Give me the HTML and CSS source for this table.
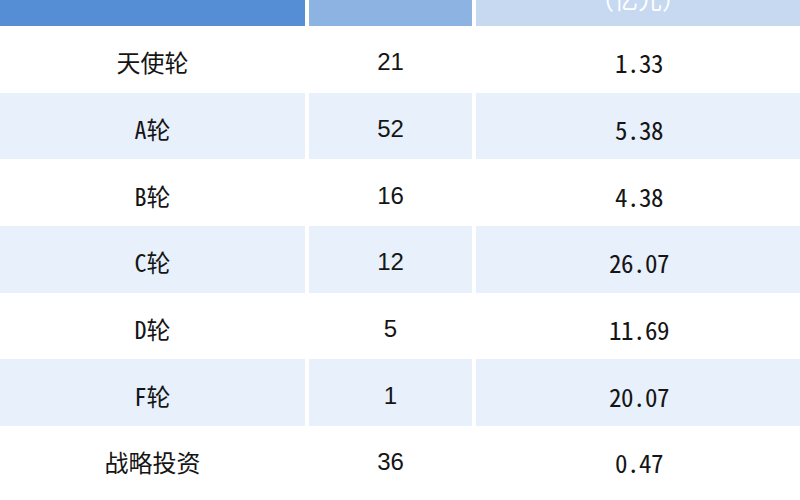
FILE: index.html
```html
<!DOCTYPE html>
<html lang="zh-CN">
<head>
<meta charset="utf-8">
<link rel="stylesheet" href="styles.css">
<title>融资轮次</title>
</head>
<body>
<div class="table">
  <div class="cell head h1"></div>
  <div class="cell head h2"></div>
  <div class="cell head h3"><span>（亿元）</span></div>

  <div class="cell name">天使轮</div><div class="cell num">21</div><div class="cell amt">1.33</div>
  <div class="cell name alt">A轮</div><div class="cell num alt">52</div><div class="cell amt alt">5.38</div>
  <div class="cell name">B轮</div><div class="cell num">16</div><div class="cell amt">4.38</div>
  <div class="cell name alt">C轮</div><div class="cell num alt">12</div><div class="cell amt alt">26.07</div>
  <div class="cell name">D轮</div><div class="cell num">5</div><div class="cell amt">11.69</div>
  <div class="cell name alt">F轮</div><div class="cell num alt">1</div><div class="cell amt alt">20.07</div>
  <div class="cell name">战略投资</div><div class="cell num">36</div><div class="cell amt">0.47</div>
</div>
</body>
</html>
```
FILE: styles.css
```css
html, body {
  margin: 0;
  padding: 0;
  background: #ffffff;
}
body {
  width: 800px;
  height: 500px;
  overflow: hidden;
  font-family: "Noto Sans CJK SC", "Liberation Sans", sans-serif;
  color: #151515;
}
.table {
  display: grid;
  grid-template-columns: 305px 163px 324px;
  grid-template-rows: 26px repeat(7, 66.67px);
  column-gap: 4px;
}
.cell {
  display: flex;
  align-items: center;
  justify-content: center;
  font-size: 24px;
  line-height: 24px;
  padding-top: 6px;
  box-sizing: border-box;
}
.head {
  align-items: flex-end;
  overflow: hidden;
  padding-top: 0;
  padding-bottom: 15px;
  color: #ffffff;
}
.head span {
  white-space: nowrap;
}
.h1 { background: #558ed5; }
.h2 { background: #8db3e2; }
.h3 { background: #c6d9f1; }
.alt { background: #e7f0fb; }
.name {
  font-family: "Noto Sans Mono CJK SC", "Noto Sans CJK SC", sans-serif;
}
.num {
  font-family: "Liberation Sans", Arial, sans-serif;
}
.amt {
  font-family: "Noto Sans Mono CJK SC", "Liberation Mono", monospace;
  font-size: 25px;
  letter-spacing: -0.5px;
  padding-left: 2px;
}
```
